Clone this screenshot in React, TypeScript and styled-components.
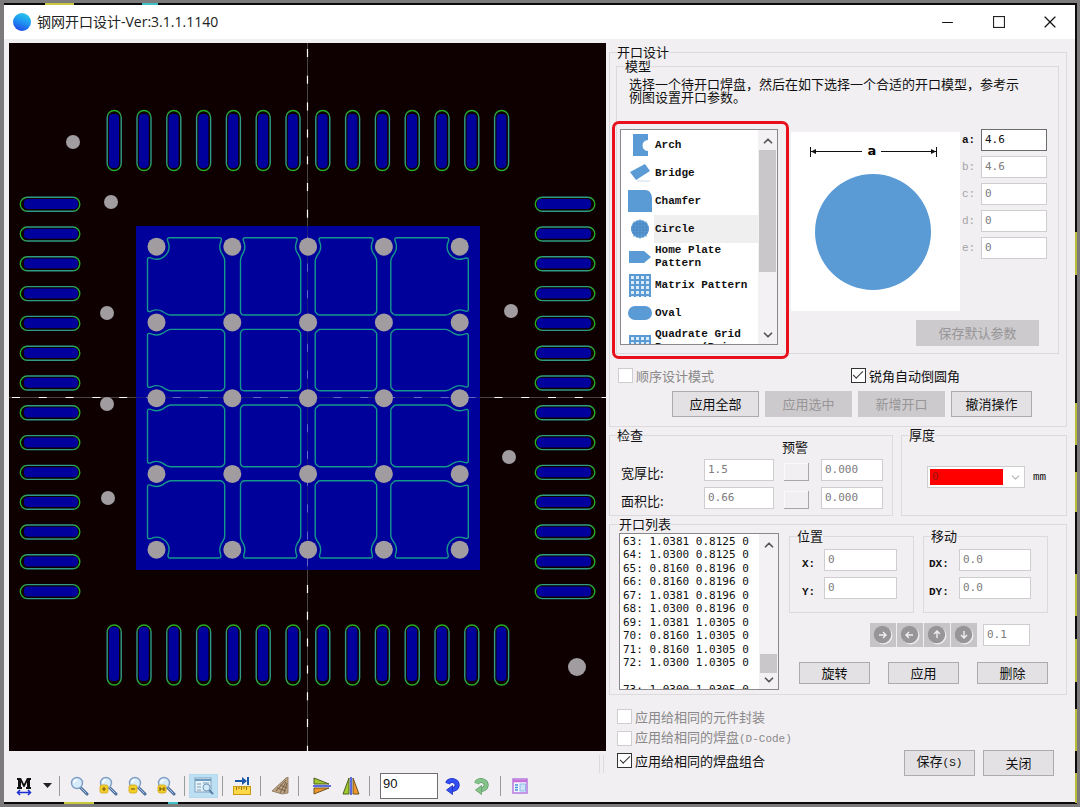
import React, { useState } from "react";
import styled, { createGlobalStyle, css } from "styled-components";
import { ChevronDown, ChevronUp, Minus, X } from "lucide-react";

const cjk = '"Noto Sans CJK SC", sans-serif';
const mono = `"Liberation Mono", ${cjk}`;
const digits = `"DejaVu Sans Mono", ${cjk}`;

const GlobalStyle = createGlobalStyle`
  *, *::before, *::after { box-sizing: border-box; }
  body {
    margin: 0;
    background: #7c7a7b;
    font-family: ${cjk};
    font-size: 13px;
    line-height: 13px;
    color: #111;
  }
  button, input, select { font: inherit; color: inherit; margin: 0; }
`;

/* ---------- window frame ---------- */

const Desktop = styled.div`
  min-height: 100vh;
  padding: 5px 5px 5px 4px;
  display: flex;
  background:
    linear-gradient(#c9c83c, #c9c83c) 45px 3px / 29px 2px no-repeat,
    linear-gradient(#3fc0c4, #3fc0c4) 142px 3px / 16px 2px no-repeat,
    linear-gradient(#c9c83c, #c9c83c) left 64px bottom 3px / 30px 2px no-repeat,
    linear-gradient(#3fc0c4, #3fc0c4) left 168px bottom 3px / 10px 2px no-repeat,
    linear-gradient(#b9bb3a, #b9bb3a) right 3px top 232px / 2px 43px no-repeat,
    linear-gradient(#b9bb3a, #b9bb3a) right 3px top 403px / 2px 42px no-repeat,
    linear-gradient(#b9bb3a, #b9bb3a) right 3px top 472px / 2px 40px no-repeat,
    linear-gradient(#b9bb3a, #b9bb3a) right 3px top 574px / 2px 42px no-repeat,
    linear-gradient(#b9bb3a, #b9bb3a) right 3px top 639px / 2px 43px no-repeat,
    linear-gradient(#b9bb3a, #b9bb3a) right 3px top 709px / 2px 42px no-repeat,
    linear-gradient(#b9bb3a, #b9bb3a) right 3px top 773px / 2px 30px no-repeat,
    linear-gradient(#0a0a0a, #0a0a0a) 4px 3px / calc(100% - 7px) calc(100% - 6px) no-repeat,
    #7c7a7b;
`;

const Window = styled.main`
  flex: 1;
  min-width: 0;
  display: flex;
  flex-direction: column;
  background: #f1eff1;
`;

const TitleBar = styled.header`
  height: 34px;
  display: flex;
  align-items: center;
  background: #fff;
  padding-left: 9px;
`;

const Title = styled.h1`
  flex: 1;
  margin: 0 0 0 6px;
  font: 400 14px/20px "Open Sans", ${cjk};
  color: #222;
`;

const WindowButton = styled.button`
  width: 51px;
  height: 34px;
  display: grid;
  place-items: center;
  border: 0;
  padding: 0;
  background: none;
`;

const Body = styled.div`
  flex: 1;
  display: grid;
  grid-template-columns: minmax(0, 1fr) 458px;
  column-gap: 3px;
  padding: 4px 8px 0 5px;
`;

/* ---------- drawing area ---------- */

const Workspace = styled.section`
  display: flex;
  flex-direction: column;
  min-width: 0;
`;

const Board = styled.svg`
  display: block;
  width: 100%;
  background: #0e0000;
`;

const Toolbar = styled.div`
  display: flex;
  flex: 1;
  min-height: 50px;
  align-items: center;
  padding-top: 18px;
`;

const ToolButton = styled.button<{ $active?: boolean; $w?: number }>`
  width: ${(p) => p.$w ?? 29}px;
  height: 24px;
  display: grid;
  place-items: center;
  flex: none;
  border: 1px solid ${(p) => (p.$active ? "#b4d9ee" : "transparent")};
  padding: 0;
  background: ${(p) => (p.$active ? "#bddff2" : "none")};
`;

const ToolPair = styled.div`
  display: flex;
  padding-left: 4px;
`;

const Divider = styled.span`
  flex: none;
  width: 1px;
  height: 20px;
  margin: 0 4px;
  background: #9b9b9b;
`;

const AngleInput = styled.input`
  width: 58px;
  height: 26px;
  margin-left: 6px;
  padding: 0 0 4px 2px;
  border: 1px solid #6f6f6f;
  background: #fff;
  font: 13px "Liberation Sans", sans-serif;
`;

const Grip = styled.span`
  width: 5px;
  height: 18px;
  margin-left: auto;
  margin-right: 2px;
  align-self: flex-start;
  margin-top: -14px;
  border: solid #dcdadc;
  border-width: 0 1px;
`;

/* ---------- form parts ---------- */

const Panel = styled.form`
  display: flex;
  flex-direction: column;
  padding-top: 3px;
`;

const Group = styled.fieldset<{ $pad: string; $top?: number }>`
  min-width: 0;
  margin: ${(p) => p.$top ?? 0}px 0 0;
  padding: ${(p) => p.$pad};
  border: 1px solid #dcdadc;
`;

const Legend = styled.legend<{ $indent?: number }>`
  margin-left: ${(p) => p.$indent ?? 8}px;
  padding: 0;
  height: 12px;
  line-height: 12px;
`;

const Hint = styled.p`
  margin: 0 0 26px 9px;
`;

const Push = styled.button<{ $w: number; $h?: number }>`
  width: ${(p) => p.$w}px;
  height: ${(p) => p.$h ?? 26}px;
  padding: 0 0 2px;
  border: 1px solid #adabad;
  background: #e3e1e3;
  &:disabled {
    background: #cccacc;
    border-color: #cccacc;
    color: #979597;
  }
`;

const Field = styled.input<{ $w?: number }>`
  width: ${(p) => (p.$w ? `${p.$w}px` : "100%")};
  height: 22px;
  min-width: 0;
  padding: 0 0 2px 3px;
  border: 1px solid #6d6b6d;
  border-radius: 0;
  background: #fff;
  font: 11px ${digits};
  &:disabled {
    border-color: #cfcdcf;
    color: #7d7b7d;
  }
`;

const CheckLabel = styled.label<{ $off?: boolean }>`
  display: flex;
  align-items: center;
  gap: 3px;
  color: ${(p) => (p.$off ? "#8a888a" : "#111")};
`;

const CheckBox = styled.input.attrs({ type: "checkbox" })`
  appearance: none;
  width: 15px;
  height: 15px;
  flex: none;
  display: grid;
  place-items: center;
  border: 1px solid #333;
  background: #fff;
  &:disabled { border-color: #cfcdcf; }
  &:checked::after {
    content: "";
    width: 10px;
    height: 5px;
    margin-top: -3px;
    border: solid #333;
    border-width: 0 0 1px 1px;
    transform: rotate(-45deg);
  }
`;

const Mono = styled.span`
  font: 11px/13px ${mono};
`;

/* ---------- model picker ---------- */

const ModelArea = styled.div`
  display: grid;
  grid-template-columns: 158px minmax(0, 1fr);
  column-gap: 13px;
`;

const ListBox = styled.div<{ $h: number }>`
  position: relative;
  display: flex;
  height: ${(p) => p.$h}px;
  border: 1px solid #8a888a;
  background: #fff;
`;

const Highlight = styled.div`
  position: absolute;
  inset: -9px -12px -15px -9px;
  border: 3px solid #e8101c;
  border-radius: 7px;
  pointer-events: none;
`;

const Options = styled.ul`
  flex: 1;
  margin: 0;
  padding: 1px 0 0 7px;
  list-style: none;
  overflow: hidden;
`;

const Option = styled.li<{ $selected?: boolean }>`
  display: grid;
  grid-template-columns: 24px 1fr;
  column-gap: 2px;
  height: 28px;
  align-items: center;
  > span {
    height: 28px;
    display: flex;
    align-items: center;
    padding-left: 1px;
    white-space: pre;
    font: 700 11px/13px ${mono};
    background: ${(p) => (p.$selected ? "#f0eff0" : "none")};
  }
`;

const ScrollTrack = styled.div`
  width: 19px;
  flex: none;
  display: flex;
  flex-direction: column;
  align-items: center;
  padding: 4px 0 2px;
  background: #f3f1f3;
  color: #555;
`;

const ScrollSpace = styled.div`
  flex: 1;
  width: 100%;
  position: relative;
`;

const ScrollThumb = styled.div<{ $top: string; $h: string }>`
  position: absolute;
  left: 1px;
  right: 1px;
  top: ${(p) => p.$top};
  height: ${(p) => p.$h};
  background: #c9c7c9;
`;

const ModelDetail = styled.div`
  display: flex;
  flex-direction: column;
`;

const PreviewRow = styled.div`
  display: flex;
  gap: 2px;
`;

const Preview = styled.svg`
  width: 169px;
  height: 179px;
  margin-top: 3px;
  background: #fff;
`;

const Params = styled.div`
  display: grid;
  align-content: start;
  gap: 5px;
`;

const Param = styled.label<{ $off: boolean }>`
  display: grid;
  grid-template-columns: 19px 66px;
  align-items: center;
  font: 700 11px/22px ${mono};
  color: ${(p) => (p.$off ? "#a5a3a5" : "#111")};
  ${(p) => p.$off && css`font-weight: 400;`}
  > input { color: ${(p) => (p.$off ? "#7d7b7d" : "#111")}; }
`;

const SaveDefaults = styled.div`
  display: flex;
  justify-content: flex-end;
  margin: 9px 19px 0 0;
`;

const OptionRow = styled.div`
  display: flex;
  justify-content: space-between;
  height: 16px;
  margin: 13px 99px 8px 2px;
`;

const ActionRow = styled.div`
  display: flex;
  justify-content: flex-end;
  gap: 6px;
  margin-right: 27px;
`;

/* ---------- checks and thickness ---------- */

const CheckRow = styled.div`
  display: grid;
  grid-template-columns: 284px minmax(0, 1fr);
  column-gap: 8px;
  margin-top: 2px;
`;

const CheckGrid = styled.div`
  display: grid;
  grid-template-columns: 73px 70px 27px 62px;
  gap: 6px 10px;
  align-items: center;
`;

const WarnTitle = styled.span`
  grid-column: 3 / span 2;
  height: 12px;
  line-height: 12px;
  margin-left: -2px;
`;

const RatioLabel = styled.label`
  padding-top: 4px;
`;

const WarnButton = styled.button`
  width: 25px;
  height: 18px;
  margin-top: 4px;
  padding: 0;
  background: #f1eff1;
  border: solid;
  border-width: 0 1px 1px 0;
  border-color: #a8a6a8;
  box-shadow: inset 1px 1px #fafafa;
`;

const Thickness = styled.div`
  display: flex;
  align-items: center;
  gap: 8px;
`;

const SelectWrap = styled.span`
  position: relative;
  display: flex;
  color: #b5b3b5;
  > svg { position: absolute; right: 3px; top: 5px; pointer-events: none; }
`;

const ColorSelect = styled.select`
  appearance: none;
  width: 98px;
  height: 22px;
  padding: 0 0 2px 4px;
  border: 1px solid #cfcdcf;
  border-radius: 0;
  background: linear-gradient(#f00, #f00) 2px 2px / 73px 16px no-repeat #fff;
  font: 11px ${digits};
  &:disabled { color: #a01010; opacity: 1; }
`;

/* ---------- aperture list ---------- */

const ApertureArea = styled.div`
  display: grid;
  grid-template-columns: 160px minmax(0, 1fr);
  column-gap: 10px;
  > :first-child { margin-top: 3px; }
`;

const Lines = styled.div`
  flex: 1;
  overflow: hidden;
  padding: 1px 0 0 3px;
  font: 11px/13px ${digits};
  white-space: pre;
`;

const LineBlock = styled.div`
  height: 148px;
  display: flex;
  flex-direction: column;
  > div { flex: 1; }
`;

const Tools = styled.div`
  display: flex;
  flex-direction: column;
`;

const CoordRow = styled.div`
  display: grid;
  grid-template-columns: 1fr 1fr;
  column-gap: 9px;
`;

const Coord = styled.label<{ $lead: number }>`
  display: grid;
  grid-template-columns: ${(p) => p.$lead}px minmax(0, 1fr);
  align-items: center;
  font: 700 11px/22px ${mono};
  & + & { margin-top: 6px; }
  > span { padding-top: 8px; line-height: 14px; }
`;

const NudgeRow = styled.div`
  display: flex;
  justify-content: flex-end;
  align-items: center;
  gap: 6px;
  margin: 10px 18px 15px 0;
`;

const NudgeSet = styled.div`
  display: flex;
  gap: 1px;
`;

const Nudge = styled.button`
  width: 26px;
  height: 24px;
  padding: 0;
  border: 0;
  display: grid;
  place-items: center;
  background: #c6c4c6;
`;

const EditRow = styled.div`
  display: flex;
  justify-content: space-between;
  padding-left: 10px;
`;

const Footer = styled.div`
  display: flex;
  justify-content: space-between;
  align-items: flex-end;
  margin-top: 10px;
  padding: 0 13px 25px 8px;
`;

const Scopes = styled.div`
  display: flex;
  flex-direction: column;
  align-self: flex-start;
  margin-bottom: 5px;
  > label { height: 22px; }
`;

const FooterButtons = styled.div`
  display: flex;
  gap: 8px;
`;

/* ---------- drawings ---------- */

const STEP = 29.8;
const R = 12.5;
const ballX = [0, 1, 2, 3, 4].map((i) => 156.5 + i * 75.8);
const ballY = [0, 1, 2, 3, 4].map((i) => 246.7 + i * 75.75);
const colEdges = [[147.5, 224.7], [240.5, 300.7], [315.2, 376.7], [390.8, 468.3]];
const rowEdges = [[237.7, 315], [329.4, 390.7], [405, 466.7], [480.8, 558]];

/* Outline of one paste window, with its corners cut back around the four vias. */
function cellPath(c: number, r: number) {
  const [x0, x1] = colEdges[c];
  const [y0, y1] = rowEdges[r];
  const corners = [
    { ex: x0, ey: y0, cx: ballX[c], cy: ballY[r], sx: 1, sy: 1, vFirst: true },
    { ex: x1, ey: y0, cx: ballX[c + 1], cy: ballY[r], sx: -1, sy: 1, vFirst: false },
    { ex: x1, ey: y1, cx: ballX[c + 1], cy: ballY[r + 1], sx: -1, sy: -1, vFirst: true },
    { ex: x0, ey: y1, cx: ballX[c], cy: ballY[r + 1], sx: 1, sy: -1, vFirst: false },
  ];
  const parts = corners.map((k) => {
    const dx = Math.sqrt(R * R - (k.ey - k.cy) ** 2);
    const dy = Math.sqrt(R * R - (k.ex - k.cx) ** 2);
    const h = { x: k.cx + k.sx * dx, y: k.ey };
    const v = { x: k.ex, y: k.cy + k.sy * dy };
    const [a, b] = k.vFirst ? [v, h] : [h, v];
    const t0 = Math.atan2(a.y - k.cy, a.x - k.cx);
    let t1 = Math.atan2(b.y - k.cy, b.x - k.cx);
    if (t1 > t0) t1 -= Math.PI * 2;
    const inset = Math.min(0.5, (t0 - t1) / 4);
    const soft = t0 - t1 > 1 ? 4 : 2;
    const p = (t: number) => `${k.cx + R * Math.cos(t)} ${k.cy + R * Math.sin(t)}`;
    /* control points sit where the tangent of the arc leaves the straight edge */
    const out = (q: { x: number; y: number }) =>
      q === h ? [q.x + k.sx * soft, q.y, q.x + k.sx * (soft > 2 ? 1 : 0), q.y] : [q.x, q.y + k.sy * soft, q.x, q.y + k.sy * (soft > 2 ? 1 : 0)];
    const [ax, ay, aqx, aqy] = out(a);
    const [bx, by, bqx, bqy] = out(b);
    return `${ax} ${ay} Q${aqx} ${aqy} ${p(t0 - inset)} A${R} ${R} 0 0 0 ${p(t1 + inset)} Q${bqx} ${bqy} ${bx} ${by}`;
  });
  return "M" + parts.join(" L") + " Z";
}

const strayVias = [
  [73, 142, 7], [111, 202, 7], [107, 313, 7], [107, 404, 7], [108, 498, 7],
  [511, 311, 7], [509, 457, 7], [577, 667, 9],
];

function BoardDrawing() {
  const lanes = Array.from({ length: 14 }, (_, i) => i * STEP);
  return (
    <Board viewBox="9 43 597 708" role="img" aria-label="PCB">
      <defs>
        <linearGradient id="padV" x1="0" y1="0" x2="0" y2="1">
          <stop offset="0" stopColor="#26ac20" />
          <stop offset="0.14" stopColor="#2f9a86" />
          <stop offset="0.86" stopColor="#2f9a86" />
          <stop offset="1" stopColor="#26ac20" />
        </linearGradient>
        <linearGradient id="padH" x1="0" y1="0" x2="1" y2="0">
          <stop offset="0" stopColor="#26ac20" />
          <stop offset="0.14" stopColor="#2f9a86" />
          <stop offset="0.86" stopColor="#2f9a86" />
          <stop offset="1" stopColor="#26ac20" />
        </linearGradient>
      </defs>
      {lanes.map((d) => (
        <g key={d}>
          <rect x={109 + d} y={114} width={10} height={54} rx={4} fill="#00009c" />
          <rect x={107.2 + d} y={110.5} width={14} height={60} rx={7} fill="none" stroke="url(#padV)" strokeWidth={1.4} />
          <rect x={109 + d} y={627} width={10} height={54} rx={4} fill="#00009c" />
          <rect x={107.2 + d} y={625} width={14} height={60} rx={7} fill="none" stroke="url(#padV)" strokeWidth={1.4} />
          <rect x={24} y={199 + d} width={54} height={10} rx={4} fill="#00009c" />
          <rect x={20.3} y={197.2 + d} width={59.5} height={14} rx={7} fill="none" stroke="url(#padH)" strokeWidth={1.4} />
          <rect x={537} y={199 + d} width={54} height={10} rx={4} fill="#00009c" />
          <rect x={535.3} y={197.2 + d} width={59.5} height={14} rx={7} fill="none" stroke="url(#padH)" strokeWidth={1.4} />
        </g>
      ))}
      <path d="M307.5 43V751M9 397.5H606" stroke="#4a4444" strokeWidth={1} />
      <path d="M307.5 49V751" stroke="#fff" strokeWidth={1.2} strokeDasharray="8 18.8" />
      <path d="M12 397.5H606" stroke="#fff" strokeWidth={1.2} strokeDasharray="8 18.8" />
      <rect x={136} y={226} width={344} height={344} fill="#00009a" fillOpacity={0.6} />
      <path d="M136 226H480V570H136Z M307 226V570H308V226Z M136 397V398H480V397Z" fill="#00009a" fillRule="evenodd" />
      {rowEdges.map((_, r) =>
        colEdges.map((__, c) => (
          <path key={`${r}${c}`} d={cellPath(c, r)} fill="none" stroke="#15988c" strokeWidth={1.4} />
        ))
      )}
      {ballY.map((y) => ballX.map((x) => <circle key={`${x}${y}`} cx={x} cy={y} r={9} fill="#a09ca0" />))}
      {strayVias.map(([x, y, r]) => <circle key={`${x}${y}`} cx={x} cy={y} r={r} fill="#a09ca0" />)}
    </Board>
  );
}

const BLUE = "#5b9bd5";

function ModelIcon({ kind }: { kind: string }) {
  const grid = (n: number[], m: number[], h: number) => (
    <>
      <rect x={1} y={24 - h} width={22} height={h} fill="#dcebf8" />
      <path
        d={n.map((x) => `M${x} ${24 - h}V24`).join("") + m.map((y) => `M1 ${y}H23`).join("")}
        stroke={BLUE}
        strokeWidth={2}
      />
    </>
  );
  return (
    <svg width={24} height={24} viewBox="0 0 24 24" aria-hidden="true">
      {kind === "arch" && <path d="M5 1H20V7A5 5 0 0 0 20 18V23H5Z" fill={BLUE} />}
      {kind === "bridge" && (
        <>
          <path d="M2 11L17 3L22 10L8 19Z" fill={BLUE} />
          <path d="M9 20H22" stroke="#c9dcee" />
        </>
      )}
      {kind === "chamfer" && <path d="M0 1H17Q21 1 22.500 4Q24 6 24 9V23H0Z" fill={BLUE} />}
      {kind === "circle" && (
        <>
          <circle cx={12} cy={12} r={9} fill={BLUE} />
          <path d="M6 4V20M9 3V21M12 2V22M15 3V21M18 4V20M4 7H20M3 10H21M3 13H21M4 16H20" stroke="#4580bd" strokeWidth={0.6} />
        </>
      )}
      {kind === "home" && <path d="M1 6H16L23 12L16 18H1Z" fill={BLUE} />}
      {kind === "matrix" && grid([2, 7, 12, 17, 22], [2, 7, 12, 17, 22], 23)}
      {kind === "oval" && <rect x={0} y={5} width={24} height={14} rx={7} fill={BLUE} />}
      {kind === "quad" && grid([2, 7, 12, 17, 22], [7, 12, 17, 22], 18)}
    </svg>
  );
}

function Lens({ mark }: { mark?: string }) {
  return (
    <svg width={20} height={20} viewBox="0 0 20 20" aria-hidden="true">
      <path d="M11 11L18 18" stroke="#4d6f9e" strokeWidth={3} strokeLinecap="round" />
      <path d="M11 11L17 17" stroke="#a9c4e0" strokeWidth={1} strokeLinecap="round" />
      <circle cx={8} cy={7} r={5.5} fill="#d6ecfb" stroke="#7f9dc4" strokeWidth={1.4} />
      <path d="M5 7A3 3 0 0 1 8 4" stroke="#fff" strokeWidth={1.4} fill="none" />
      {mark && (
        <>
          <rect x={2} y={9} width={8} height={8} rx={2} fill="#f3cf2b" stroke="#d2a613" strokeWidth={0.8} />
          <path d={mark} stroke="#7a5a08" strokeWidth={1.2} fill="none" />
        </>
      )}
    </svg>
  );
}

/* Clockwise arrow that sweeps over the top and points back to the left. */
function TurnIcon({ color, edge }: { color: string; edge: string }) {
  return (
    <svg width={18} height={18} viewBox="0 0 18 18" aria-hidden="true">
      <path d="M3.500 6.500A5 4.500 0 1 1 8.500 12.500" fill="none" stroke={edge} strokeWidth={5} />
      <path d="M3.500 6.500A5 4.500 0 1 1 8.500 12.500" fill="none" stroke={color} strokeWidth={3.4} />
      <path d="M2.500 13L8.500 8.500V17.500Z" fill={color} stroke={edge} strokeWidth={0.8} />
    </svg>
  );
}

const nudgePaths: Record<string, string> = {
  右: "M6 10H13M10 7L13 10L10 13",
  左: "M13 10H6M9 7L6 10L9 13",
  上: "M10 13V6M7 9L10 6L13 9",
  下: "M10 6V13M7 10L10 13L13 10",
};

function Scrollbar({ top, height }: { top: string; height: string }) {
  return (
    <ScrollTrack aria-hidden="true">
      <ChevronUp size={14} strokeWidth={3} />
      <ScrollSpace>
        <ScrollThumb $top={top} $h={height} />
      </ScrollSpace>
      <ChevronDown size={14} strokeWidth={3} />
    </ScrollTrack>
  );
}

/* ---------- data ---------- */

const models = [
  ["arch", "Arch"],
  ["bridge", "Bridge"],
  ["chamfer", "Chamfer"],
  ["circle", "Circle"],
  ["home", "Home Plate\nPattern"],
  ["matrix", "Matrix Pattern"],
  ["oval", "Oval"],
  ["quad", "Quadrate Grid\nReserve(Pairs"],
];

const params = [["a", "4.6"], ["b", "4.6"], ["c", "0"], ["d", "0"], ["e", "0"]];

const apertures = [
  "63: 1.0381 0.8125 0",
  "64: 1.0300 0.8125 0",
  "65: 0.8160 0.8196 0",
  "66: 0.8160 0.8196 0",
  "67: 1.0381 0.8196 0",
  "68: 1.0300 0.8196 0",
  "69: 1.0381 1.0305 0",
  "70: 0.8160 1.0305 0",
  "71: 0.8160 1.0305 0",
  "72: 1.0300 1.0305 0",
  " ",
];

function MainToolbar() {
  return (
    <Toolbar role="toolbar">
      <ToolButton $w={30} aria-label="测量">
        <svg width={16} height={20} viewBox="0 0 16 20">
          <path d="M1 2H5L8 8L11 2H15V4H14V11H15V13H10V11H11V6L8.5 11H7.5L5 6V11H6V13H1V11H2V4H1Z" fill="#111" />
          <path d="M2 16.5H14M4 14L1.5 16.5L4 19M12 14L14.5 16.5L12 19" stroke="#1c2fd0" strokeWidth={1.5} fill="none" />
        </svg>
      </ToolButton>
      <ToolButton $w={16} aria-label="更多">
        <svg width={9} height={5} viewBox="0 0 9 5"><path d="M0 0H9L4.5 5Z" fill="#222" /></svg>
      </ToolButton>
      <Divider />
      <ToolButton aria-label="缩放"><Lens /></ToolButton>
      <ToolButton aria-label="放大"><Lens mark="M4 13H8M6 11V15" /></ToolButton>
      <ToolButton aria-label="缩小"><Lens mark="M4 13H8" /></ToolButton>
      <ToolButton aria-label="全部"><Lens mark="M4 11V15M8 11V15M4 13H8" /></ToolButton>
      <Divider />
      <ToolButton $active aria-label="预览">
        <svg width={20} height={18} viewBox="0 0 20 18">
          <rect x={1} y={1} width={16} height={14} fill="#e6f2fa" stroke="#7fa3bd" />
          <path d="M1 3H17" stroke="#6d9cc0" strokeWidth={2} />
          <path d="M3 7H7M3 10H7M3 13H7M9 6H15" stroke="#7d9db4" />
          <path d="M15 13L19 17" stroke="#5a7fa6" strokeWidth={2} />
          <circle cx={12.5} cy={10.5} r={3.5} fill="#d3ebf8" stroke="#6f95b5" />
        </svg>
      </ToolButton>
      <Divider />
      <ToolButton aria-label="标尺">
        <svg width={18} height={18} viewBox="0 0 18 18">
          <path d="M2 4H10" stroke="#1b57a8" strokeWidth={2} fill="none" />
          <path d="M9 0L14 4L9 8Z" fill="#1b57a8" />
          <path d="M15 0V8" stroke="#1b57a8" strokeWidth={2} />
          <rect x={0.5} y={9.5} width={17} height={8} fill="#ffd84a" stroke="#c79a17" />
          <path d="M3.5 10V13M6 10V12M8.5 10V13M11 10V12M13.5 10V13" stroke="#9a7410" />
        </svg>
      </ToolButton>
      <Divider />
      <ToolButton aria-label="清除">
        <svg width={18} height={18} viewBox="0 0 18 18">
          <path d="M15 1L17 0L17 16L11 17L1 14Z" fill="#bda482" stroke="#85705a" strokeWidth={0.8} />
          <path d="M15 3L5 14M15 5L9 16M16 6L13 16M9 8L16 11M6 11L15 14" stroke="#6f5c46" strokeWidth={0.9} />
        </svg>
      </ToolButton>
      <Divider />
      <ToolPair>
        <ToolButton aria-label="垂直翻转">
          <svg width={18} height={18} viewBox="0 0 18 18">
            <path d="M1 1V7H16Z" fill="#9fcb2e" stroke="#4f5d20" />
            <path d="M1 17V11H16Z" fill="#f0962a" stroke="#6d5420" />
            <path d="M0 9H18" stroke="#5a6be0" strokeWidth={2} />
          </svg>
        </ToolButton>
        <ToolButton aria-label="水平翻转">
          <svg width={18} height={18} viewBox="0 0 18 18">
            <path d="M1 17H7V1Z" fill="#9fcb2e" stroke="#4f5d20" />
            <path d="M17 17H11V1Z" fill="#f0962a" stroke="#6d5420" />
            <path d="M9 0V18" stroke="#5a6be0" strokeWidth={2} />
          </svg>
        </ToolButton>
      </ToolPair>
      <Divider />
      <AngleInput defaultValue="90" aria-label="角度" />
      <ToolButton aria-label="旋转视图"><TurnIcon color="#3350f4" edge="#1a2cc0" /></ToolButton>
      <ToolButton aria-label="恢复视图"><TurnIcon color="#86c48c" edge="#5c9a66" /></ToolButton>
      <Divider />
      <ToolButton aria-label="面板">
        <svg width={16} height={16} viewBox="0 0 16 16">
          <rect x={1} y={1} width={14} height={14} fill="#f4f8ff" stroke="#b57be0" strokeWidth={1.5} />
          <path d="M1 3H15" stroke="#c86fd8" strokeWidth={2.5} />
          <path d="M3 7H6M3 9.5H6M3 12H6" stroke="#4a90d8" strokeWidth={1.5} />
          <rect x={8} y={6} width={5.5} height={7} fill="#cfe4f8" stroke="#8bb8e8" />
        </svg>
      </ToolButton>
      <Grip />
    </Toolbar>
  );
}

export default function App() {
  const [model, setModel] = useState("circle");
  return (
    <>
      <GlobalStyle />
      <Desktop>
        <Window>
          <TitleBar>
            <svg width={18} height={18} viewBox="0 0 18 18" aria-hidden="true">
              <defs>
                <linearGradient id="logo" x1="0.7" y1="0" x2="0.3" y2="1">
                  <stop offset="0" stopColor="#25c8ea" />
                  <stop offset="0.5" stopColor="#1f93f2" />
                  <stop offset="1" stopColor="#2146e8" />
                </linearGradient>
              </defs>
              <circle cx={9} cy={9} r={9} fill="url(#logo)" />
            </svg>
            <Title>钢网开口设计-Ver:3.1.1.1140</Title>
            <WindowButton aria-label="最小化"><Minus size={17} strokeWidth={1.5} /></WindowButton>
            <WindowButton aria-label="最大化">
              <svg width={12} height={12} viewBox="0 0 12 12">
                <rect x={0.5} y={0.5} width={11} height={11} fill="none" stroke="#222" strokeWidth={1.2} />
              </svg>
            </WindowButton>
            <WindowButton aria-label="关闭窗口"><X size={20} strokeWidth={1.4} /></WindowButton>
          </TitleBar>
          <Body>
            <Workspace>
              <BoardDrawing />
              <MainToolbar />
            </Workspace>
            <Panel onSubmit={(e) => e.preventDefault()}>
              <Group $pad="2px 7px 9px 6px">
                <Legend $indent={1}>开口设计</Legend>
                <Group $pad="5px 0 7px 3px">
                  <Legend $indent={5}>模型</Legend>
                  <Hint>
                    选择一个待开口焊盘，然后在如下选择一个合适的开口模型，参考示
                    <br />
                    例图设置开口参数。
                  </Hint>
                  <ModelArea>
                    <ListBox $h={216}>
                      <Options role="listbox" aria-label="模型">
                        {models.map(([id, name]) => (
                          <Option
                            key={id}
                            role="option"
                            aria-selected={id === model}
                            $selected={id === model}
                            onClick={() => setModel(id)}
                          >
                            <ModelIcon kind={id} />
                            <span>{name}</span>
                          </Option>
                        ))}
                      </Options>
                      <Scrollbar top="2px" height="68%" />
                      <Highlight />
                    </ListBox>
                    <ModelDetail>
                      <PreviewRow>
                        <Preview viewBox="0 0 169 179" role="img" aria-label="Circle">
                          <path d="M19.5 15V25M145.5 15V25M20 19.5H71M90 19.5H145" stroke="#111" />
                          <path d="M20 19.5L25 17V22ZM145 19.5L140 17V22Z" fill="#111" />
                          <text x={81} y={23} textAnchor="middle" fontFamily="DejaVu Sans" fontWeight={700} fontSize={13}>a</text>
                          <circle cx={82} cy={100} r={58} fill={BLUE} />
                        </Preview>
                        <Params>
                          {params.map(([name, value], i) => (
                            <Param key={name} $off={i > 0}>
                              {name}:
                              <Field defaultValue={value} disabled={i > 0} />
                            </Param>
                          ))}
                        </Params>
                      </PreviewRow>
                      <SaveDefaults>
                        <Push type="button" $w={123} disabled>保存默认参数</Push>
                      </SaveDefaults>
                    </ModelDetail>
                  </ModelArea>
                </Group>
                <OptionRow>
                  <CheckLabel $off><CheckBox disabled />顺序设计模式</CheckLabel>
                  <CheckLabel><CheckBox defaultChecked />锐角自动倒圆角</CheckLabel>
                </OptionRow>
                <ActionRow>
                  <Push type="button" $w={87}>应用全部</Push>
                  <Push type="button" $w={87} disabled>应用选中</Push>
                  <Push type="button" $w={87} disabled>新增开口</Push>
                  <Push type="button" $w={81}>撤消操作</Push>
                </ActionRow>
              </Group>

              <CheckRow>
                <Group $pad="0 0 6px 11px">
                  <Legend $indent={-4}>检查</Legend>
                  <CheckGrid>
                    <WarnTitle>预警</WarnTitle>
                    <RatioLabel htmlFor="widthRatio">宽厚比:</RatioLabel>
                    <Field id="widthRatio" defaultValue="1.5" disabled />
                    <WarnButton type="button" aria-label="宽厚比预警" />
                    <Field defaultValue="0.000" disabled aria-label="宽厚比预警值" />
                    <RatioLabel htmlFor="areaRatio">面积比:</RatioLabel>
                    <Field id="areaRatio" defaultValue="0.66" disabled />
                    <WarnButton type="button" aria-label="面积比预警" />
                    <Field defaultValue="0.000" disabled aria-label="面积比预警值" />
                  </CheckGrid>
                </Group>
                <Group $pad="25px 0 0 25px">
                  <Legend $indent={-18}>厚度</Legend>
                  <Thickness>
                    <SelectWrap>
                      <ColorSelect disabled aria-label="厚度" defaultValue="0">
                        <option value="0">0</option>
                      </ColorSelect>
                      <ChevronDown size={13} />
                    </SelectWrap>
                    <Mono>mm</Mono>
                  </Thickness>
                </Group>
              </CheckRow>

              <Group $pad="0 18px 4px 9px" $top={2}>
                <Legend $indent={0}>开口列表</Legend>
                <ApertureArea>
                  <ListBox $h={157}>
                    <Lines>
                      <LineBlock>
                        {apertures.map((line) => <div key={line}>{line}</div>)}
                      </LineBlock>
                      <div>73: 1.0300 1.0305 0</div>
                    </Lines>
                    <Scrollbar top="84%" height="16%" />
                  </ListBox>
                  <Tools>
                    <CoordRow>
                      <Group $pad="7px 16px 13px 12px">
                        <Legend $indent={-5}>位置</Legend>
                        <Coord $lead={22}><span>X:</span><Field defaultValue="0" disabled /></Coord>
                        <Coord $lead={22}><span>Y:</span><Field defaultValue="0" disabled /></Coord>
                      </Group>
                      <Group $pad="7px 16px 13px 5px">
                        <Legend $indent={2}>移动</Legend>
                        <Coord $lead={30}><span>DX:</span><Field defaultValue="0.0" disabled /></Coord>
                        <Coord $lead={30}><span>DY:</span><Field defaultValue="0.0" disabled /></Coord>
                      </Group>
                    </CoordRow>
                    <NudgeRow>
                      <NudgeSet>
                        {Object.entries(nudgePaths).map(([name, d]) => (
                          <Nudge key={name} type="button" disabled aria-label={name}>
                            <svg width={20} height={20} viewBox="0 0 20 20">
                              <circle cx={10.5} cy={10.5} r={9} fill="#efedef" />
                              <circle cx={9.5} cy={9.5} r={8.7} fill="#979597" />
                              <path d={d} stroke="#f1eff1" strokeWidth={1.4} fill="none" />
                            </svg>
                          </Nudge>
                        ))}
                      </NudgeSet>
                      <Field $w={47} defaultValue="0.1" disabled aria-label="步长" />
                    </NudgeRow>
                    <EditRow>
                      <Push type="button" $w={71} $h={22}>旋转</Push>
                      <Push type="button" $w={71} $h={22}>应用</Push>
                      <Push type="button" $w={71} $h={22}>删除</Push>
                    </EditRow>
                  </Tools>
                </ApertureArea>
              </Group>

              <Footer>
                <Scopes>
                  <CheckLabel $off><CheckBox disabled />应用给相同的元件封装</CheckLabel>
                  <CheckLabel $off><CheckBox disabled /><span>应用给相同的焊盘<Mono>(D-Code)</Mono></span></CheckLabel>
                  <CheckLabel><CheckBox defaultChecked />应用给相同的焊盘组合</CheckLabel>
                </Scopes>
                <FooterButtons>
                  <Push type="submit" $w={71}>保存<Mono>(S)</Mono></Push>
                  <Push type="button" $w={71}>关闭</Push>
                </FooterButtons>
              </Footer>
            </Panel>
          </Body>
        </Window>
      </Desktop>
    </>
  );
}
